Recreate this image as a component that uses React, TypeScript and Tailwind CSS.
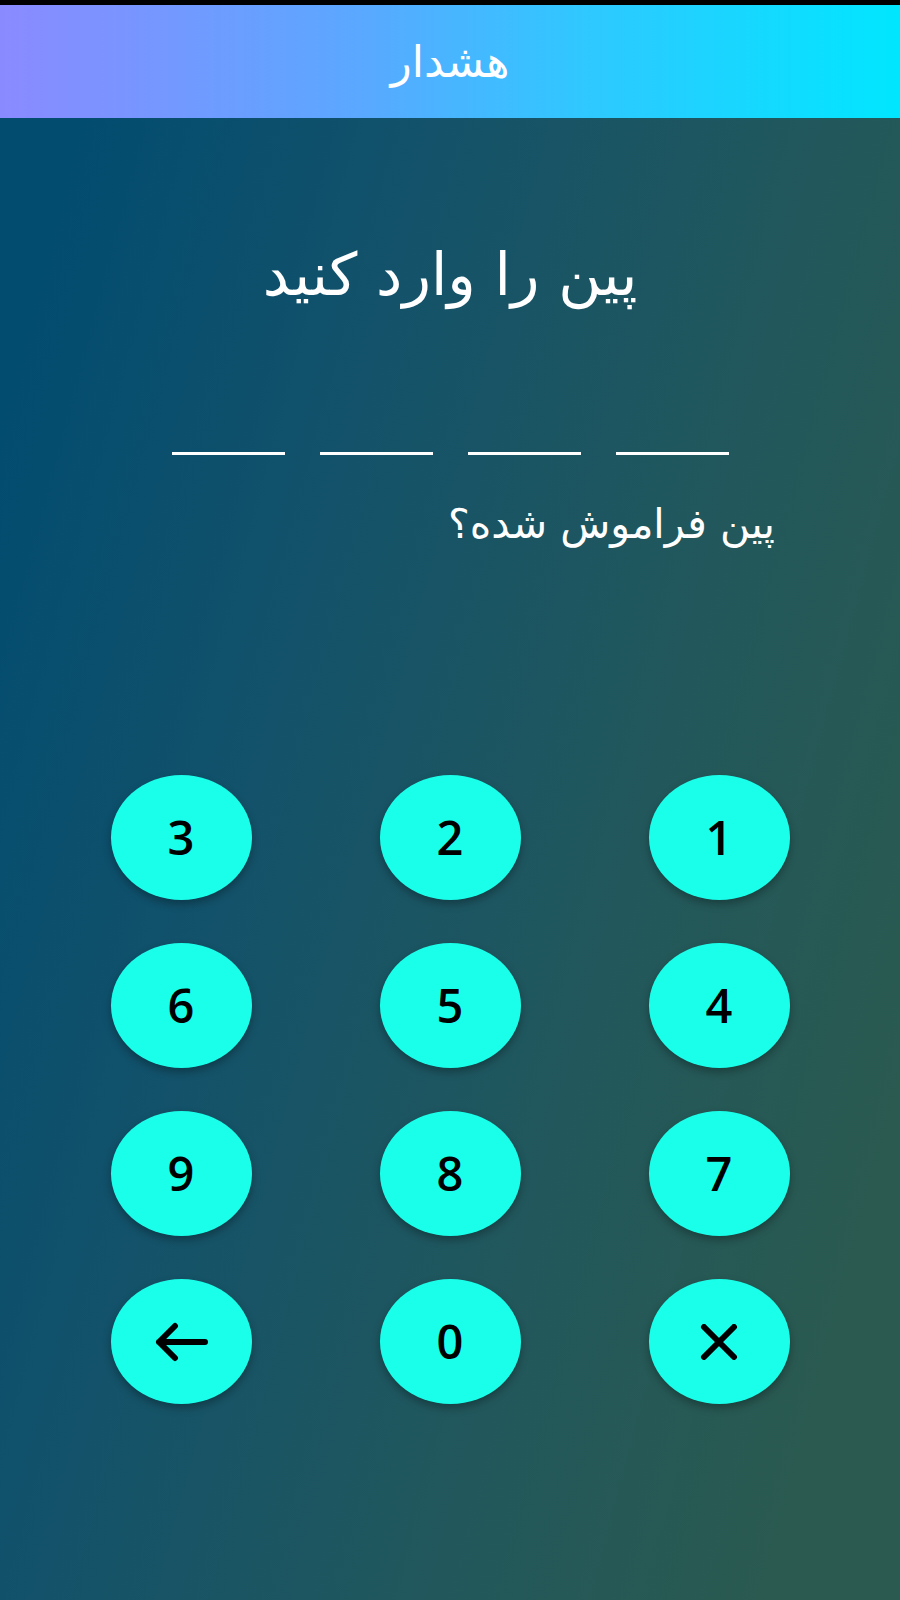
import { ReactNode } from 'react';

const arabic = { fontFamily: '"DejaVu Sans", "Noto Sans", sans-serif' };

function BackArrow() {
  return (
    <svg width="56" height="40" viewBox="0 0 56 40" fill="none" aria-hidden>
      <path
        d="M52 20H6M22 4L6 20l16 16"
        stroke="#000"
        strokeWidth="6"
        strokeLinecap="round"
        strokeLinejoin="round"
      />
    </svg>
  );
}

function CloseIcon() {
  return (
    <svg width="38" height="36" viewBox="0 0 38 36" fill="none" aria-hidden>
      <path d="M4 3l30 30M34 3L4 33" stroke="#000" strokeWidth="6" strokeLinecap="round" />
    </svg>
  );
}

function Key({ children }: { children: ReactNode }) {
  return (
    <button
      type="button"
      className="w-[141px] h-[125px] rounded-[50%] bg-[#1affea] flex items-center justify-center text-black text-[47px] font-semibold leading-none shadow-[0_4px_8px_rgba(0,0,0,0.3)]"
      style={{ fontFamily: '"Open Sans", "DejaVu Sans", sans-serif' }}
    >
      {children}
    </button>
  );
}

export default function App() {
  const keys: ReactNode[] = [
    '3', '2', '1',
    '6', '5', '4',
    '9', '8', '7',
    <BackArrow key="back" />, '0', <CloseIcon key="close" />,
  ];

  return (
    <div className="w-[900px] h-[1600px] flex flex-col bg-[linear-gradient(105deg,#024c70_8%,#13526a_35%,#22585c_65%,#2a5a50_90%)]">
      <div className="h-[5px] bg-black flex-shrink-0" />
      <header
        className="h-[113px] flex items-center justify-center bg-[linear-gradient(90deg,#8a8aff_0%,#5aa8ff_40%,#2fc8ff_65%,#00e6ff_100%)] flex-shrink-0"
        dir="rtl"
      >
        <h1 className="text-white text-[44px] leading-none" style={arabic}>
          هشدار
        </h1>
      </header>

      <main className="flex-1 flex flex-col items-center" dir="rtl">
        <h2 className="mt-[119px] text-white text-[59px] leading-[76px]" style={arabic}>
          پین را وارد کنید
        </h2>

        <div className="mt-[139px] flex gap-[35px]">
          {[0, 1, 2, 3].map((i) => (
            <div key={i} className="w-[113px] h-[3px] bg-white" />
          ))}
        </div>

        <div className="w-full pr-[125px] mt-[43px]">
          <p className="text-white text-[41px] leading-[52px]" style={arabic}>
            پین فراموش شده؟
          </p>
        </div>

        <div className="mt-[225px] grid grid-cols-[repeat(3,141px)] gap-x-[128px] gap-y-[43px]" dir="ltr">
          {keys.map((k, i) => (
            <Key key={i}>{k}</Key>
          ))}
        </div>
      </main>
    </div>
  );
}
